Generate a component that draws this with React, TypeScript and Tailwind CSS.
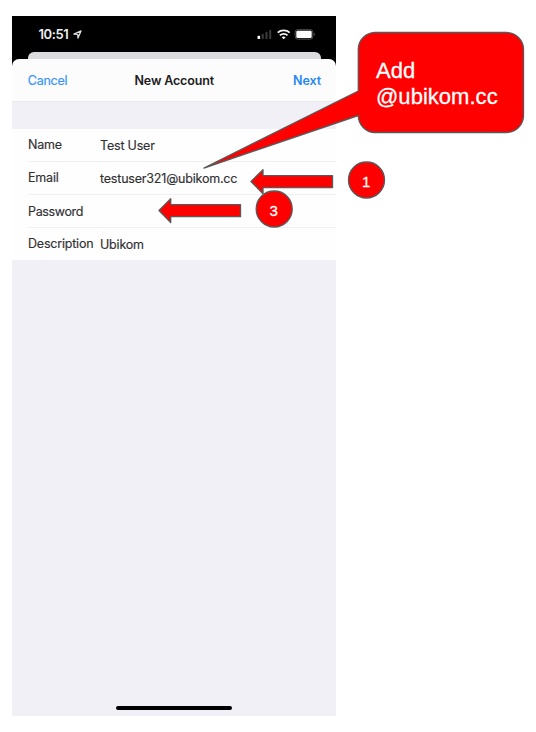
import React from "react";

type FieldProps = { label: string; value?: string; height: string; labelClass: string; valueClass?: string; last?: boolean };

function Field({ label, value, height, labelClass, valueClass = "", last }: FieldProps) {
  return (
    <div className={`relative flex pl-4 ${height}`}>
      <span className={`w-[72px] shrink-0 whitespace-nowrap leading-4 ${labelClass}`}>{label}</span>
      <span className={`whitespace-nowrap leading-4 ${valueClass}`}>{value}</span>
      {!last && <i className="absolute bottom-0 left-4 right-0 h-px bg-[#f0f0f2]" />}
    </div>
  );
}

function StatusIcons() {
  return (
    <svg className="ml-auto mr-[20px] mt-[11px] h-[14px] w-[60px]" viewBox="0 0 60 14">
      <rect x="1.5" y="8.7" width="2.6" height="3.3" rx=".7" fill="#fff" />
      <rect x="5.7" y="6.8" width="2" height="5.2" rx=".6" fill="#3c3c3c" />
      <rect x="9.5" y="4.8" width="2" height="7.2" rx=".6" fill="#3c3c3c" />
      <rect x="13.2" y="3" width="2" height="9" rx=".6" fill="#3c3c3c" />
      <g fill="none" stroke="#f5f5f5" strokeWidth="1.8">
        <path d="M21.7 5.7c3.3-3 8.7-3 12 0" />
        <path d="M23.9 8.3c2.1-1.9 5.5-1.9 7.6 0" />
      </g>
      <path d="M25.7 10.2c1.1-.9 2.9-.9 4 0l-2 2.1z" fill="#f5f5f5" />
      <rect x="39.2" y="2.7" width="17.6" height="9.4" rx="2.4" fill="none" stroke="#666" strokeWidth=".8" />
      <rect x="40.3" y="3.8" width="15.4" height="7.2" rx="1.3" fill="#fff" />
      <path d="M57.8 5.8c1.3.5 1.3 2.5 0 3z" fill="#666" />
    </svg>
  );
}

function Phone() {
  return (
    <section className="ml-3 flex h-[700px] w-[324px] flex-col bg-[#f1f0f6] text-[#303033]">
      <div className="bg-black">
        <div className="flex h-[35.5px]">
          <span className="ml-[26.5px] mt-[10px] w-[31px] text-[13px] font-semibold leading-4 tracking-[-0.4px] text-[#eee]">10:51</span>
          <svg className="ml-[3px] mt-[14px] h-[9px] w-[9px]" viewBox="0 0 9 9">
            <path d="M.9 4 8 .9 5 8.1 4.7 4.3z" fill="none" stroke="#ddd" strokeWidth="1.3" strokeLinejoin="round" />
          </svg>
          <StatusIcons />
        </div>
        <div className="mx-[15.5px] h-[7.5px] rounded-t-[6px] bg-[#dcdbde]" />
        <header className="flex h-[42px] rounded-t-[7px] bg-[#fcfcfd] px-[15px] pt-[14px] text-[12.5px] leading-4">
          <span className="w-[92px] pl-[0.8px] tracking-[-0.25px] text-[#3994fa] [-webkit-text-stroke:0.2px]">Cancel</span>
          <b className="flex-1 whitespace-nowrap pl-[15.5px] font-semibold tracking-[-0.15px] text-[#202022]">New Account</b>
          <span className="font-semibold tracking-[-0.1px] text-[#2487f5]">Next</span>
        </header>
      </div>
      <div className="h-[27.5px] border-t border-[#e9e8ed]" />
      <div className="flex flex-col bg-[#fefefe] text-[12.5px] tracking-[-0.2px] [-webkit-text-stroke:0.15px]">
        <Field label="Name" value="Test User" height="h-[33px]" labelClass="pt-[8px]" valueClass="pt-[9px]" />
        <Field label="Email" value="testuser321@ubikom.cc" height="h-[33px]" labelClass="pt-[8px]" valueClass="pt-[9px]" />
        <Field label="Password" height="h-[33px]" labelClass="pt-[9px] tracking-[-0.35px]" />
        <Field label="Description" value="Ubikom" height="h-[32.5px]" labelClass="pt-[8px]" valueClass="pt-[9px]" last />
      </div>
      <div className="mx-auto mb-[6px] mt-auto h-[4px] w-[116px] rounded-full bg-black" />
    </section>
  );
}

function Annotations() {
  return (
    <div className="absolute inset-0 font-['Liberation_Sans',Arial,sans-serif] text-white">
      <svg className="absolute inset-0 h-full w-full" viewBox="0 0 536 732" fill="#f00" stroke="#595959" strokeWidth="1.33" strokeLinejoin="round">
        <path d="M375 32.5H506.5A17 17 0 0 1 523.5 49.5V115.5A17 17 0 0 1 506.5 132.5H375A17 17 0 0 1 358.3 115.5L204 168 358.3 91V49.5A17 17 0 0 1 375 32.5Z" />
        <path d="M251 181.5 263 169.7V175.7H332.5V187.7H263V193.7Z" />
        <path d="M159 210.5 170.7 198.7V204.7H240.5V216.7H170.7V222.5Z" />
        <circle cx="366.5" cy="180" r="18" />
        <circle cx="274.2" cy="209" r="18" />
      </svg>
      <p className="absolute left-[376px] top-[58px] text-[22px] leading-[26px] tracking-[0.03px] [-webkit-text-stroke:0.3px]">Add<br />@ubikom.cc</p>
      <span className="absolute left-[362px] top-[174px] text-[15px] leading-4 [-webkit-text-stroke:0.3px]">1</span>
      <span className="absolute left-[269.6px] top-[203px] text-[15px] leading-4 [-webkit-text-stroke:0.3px]">3</span>
    </div>
  );
}

export default function App() {
  return (
    <main className="relative h-[732px] w-[536px] overflow-hidden bg-white pt-4 font-[Inter,sans-serif]">
      <Phone />
      <Annotations />
    </main>
  );
}
